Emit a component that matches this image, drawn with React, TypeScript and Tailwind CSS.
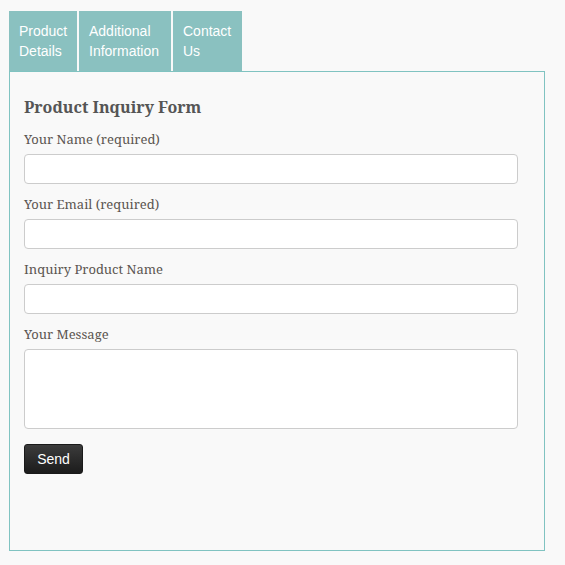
export default function App() {
  const tabs = [
    { a: 'Product', b: 'Details', w: 'w-[68px]' },
    { a: 'Additional', b: 'Information', w: 'w-[92px]' },
    { a: 'Contact', b: 'Us', w: 'w-[69px]' },
  ]
  const fields = ['Your Name (required)', 'Your Email (required)', 'Inquiry Product Name']

  return (
    <div className="min-h-[565px] bg-[#f9f9f9] pl-[9px] pt-[11px] font-['Noto_Serif','DejaVu_Serif',serif]">
      {/* Tabs */}
      <div className="flex gap-[2px]">
        {tabs.map((t) => (
          <div
            key={t.a}
            className={`${t.w} bg-[#8ac1c0] px-[10px] py-[10px] font-['Liberation_Sans',Arial,sans-serif] text-[14px] leading-[20px] text-white`}
          >
            {t.a}
            <br />
            {t.b}
          </div>
        ))}
      </div>

      {/* Panel */}
      <div className="w-[536px] h-[480px] border border-[#80c3c1] px-[14px] pt-[24px]">
        <h2 className="text-[16px] leading-[22px] font-bold text-[#555] mb-[11px]">
          Product Inquiry Form
        </h2>
        {fields.map((f) => (
          <div key={f}>
            <label className="block text-[13px] leading-[20px] text-[#5b5550] mb-[5px]">{f}</label>
            <input
              type="text"
              className="block w-[494px] h-[30px] bg-white border border-[#ccc] rounded-[4px] mb-[10px]"
            />
          </div>
        ))}
        <label className="block text-[13px] leading-[20px] text-[#5b5550] mb-[5px]">Your Message</label>
        <textarea className="block w-[494px] h-[80px] bg-white border border-[#ccc] rounded-[4px] mb-[15px] resize-none" />
        <button className="w-[59px] h-[30px] rounded-[3px] bg-gradient-to-b from-[#3c3c3c] to-[#1c1c1c] border border-[#1a1a1a] text-white font-['Liberation_Sans',Arial,sans-serif] text-[14px]">
          Send
        </button>
      </div>
    </div>
  )
}
